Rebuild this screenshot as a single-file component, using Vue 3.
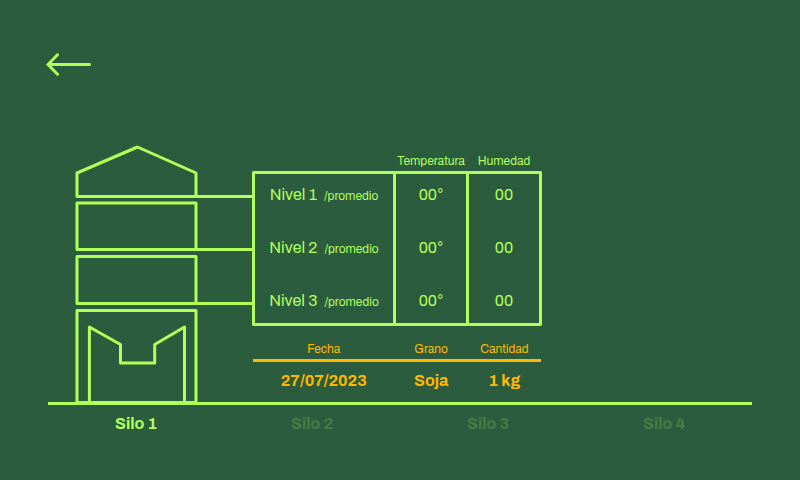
<script setup>
import { ref } from 'vue'

const levels = [
  { name: 'Nivel 1', temperature: '00°', humidity: '00' },
  { name: 'Nivel 2', temperature: '00°', humidity: '00' },
  { name: 'Nivel 3', temperature: '00°', humidity: '00' },
]

const silos = ['Silo 1', 'Silo 2', 'Silo 3', 'Silo 4']
const active = ref(0)
</script>

<template>
  <main class="page">
    <header class="top">
      <button class="back" type="button" aria-label="Volver">
        <svg width="46" height="24" viewBox="0 0 46 24" aria-hidden="true">
          <path d="M43.5 12.5H2M11.5 2.8L2 12.5l9.5 9.7" />
        </svg>
      </button>
    </header>

    <section class="scene">
      <svg class="silo" width="204" height="258" viewBox="0 0 204 258" aria-hidden="true">
        <path d="M148 52.5H29V29L89.5 3L148 29V52.5" />
        <rect x="29" y="59" width="119" height="46.5" />
        <rect x="29" y="112.5" width="119" height="47" />
        <rect x="29" y="166.5" width="119" height="92" />
        <path d="M41.4 258V183L72.5 200.5V219H106.7V200.5L136.5 183V258" />
        <path d="M148 52.5H205M148 105.5H205M148 159.5H205" />
      </svg>

      <div class="data">
        <table class="levels">
          <colgroup>
            <col class="wide" />
            <col />
            <col />
          </colgroup>
          <thead>
            <tr>
              <td></td>
              <th scope="col">Temperatura</th>
              <th scope="col">Humedad</th>
            </tr>
          </thead>
          <tbody>
            <tr v-for="level in levels" :key="level.name">
              <th scope="row">{{ level.name }}<span class="note">/promedio</span></th>
              <td>{{ level.temperature }}</td>
              <td>{{ level.humidity }}</td>
            </tr>
          </tbody>
        </table>

        <table class="batch">
          <colgroup>
            <col class="wide" />
            <col />
            <col />
          </colgroup>
          <thead>
            <tr>
              <th scope="col">Fecha</th>
              <th scope="col">Grano</th>
              <th scope="col">Cantidad</th>
            </tr>
          </thead>
          <tbody>
            <tr>
              <td>27/07/2023</td>
              <td>Soja</td>
              <td>1 kg</td>
            </tr>
          </tbody>
        </table>
      </div>
    </section>

    <nav class="silos" aria-label="Silos">
      <a
        v-for="(silo, i) in silos"
        :key="silo"
        :href="'#silo-' + (i + 1)"
        :class="{ active: i === active }"
        @click.prevent="active = i"
      >{{ silo }}</a>
    </nav>
  </main>
</template>

<style>
body {
  background: #2b5c3e;
}
</style>

<style scoped>
.page {
  --lime: #b2ff59;
  --amber: #ffb800;
  box-sizing: border-box;
  min-height: 100vh;
  padding: 52px 48px 24px;
  background: #2b5c3e;
  color: var(--lime);
  font: 16px/20px Archivo, "Liberation Sans", Arial, sans-serif;
}

.top {
  display: flex;
  margin-bottom: 68px;
}

.back {
  display: flex;
  margin: 0 0 0 -2px;
  padding: 0;
  border: 0;
  background: none;
  color: inherit;
  cursor: pointer;
}

svg {
  display: block;
  flex: none;
  fill: none;
  stroke: currentColor;
  stroke-width: 3;
  stroke-linejoin: round;
}

.back svg {
  stroke-linecap: round;
  stroke-linejoin: miter;
}

.scene {
  display: flex;
  align-items: flex-end;
  border-bottom: 3px solid var(--lime);
}

.data {
  width: 290px;
  padding-bottom: 11px;
}

table {
  width: 100%;
  table-layout: fixed;
  border-collapse: separate;
  border-spacing: 0;
  text-align: center;
}

th,
td {
  padding: 0;
  font-weight: 400;
  white-space: nowrap;
}

col {
  width: 73px;
}

.levels .wide {
  width: 144px;
}

thead th {
  padding-bottom: 2px;
  font-size: 12px;
  line-height: 16px;
}

.levels thead th {
  border-right: 3px solid transparent;
}

.levels tbody th,
.levels tbody td {
  padding: 11px 0 22px;
  border-right: 3px solid var(--lime);
}

.levels tbody th {
  border-left: 3px solid var(--lime);
}

.levels tbody tr:first-child > * {
  border-top: 3px solid var(--lime);
}

.levels tbody tr:last-child > * {
  padding-bottom: 12px;
  border-bottom: 3px solid var(--lime);
}

.levels tbody tr:first-child > :first-child {
  border-top-left-radius: 2px;
}

.levels tbody tr:first-child > :last-child {
  border-top-right-radius: 2px;
}

.levels tbody tr:last-child > :first-child {
  border-bottom-left-radius: 2px;
}

.levels tbody tr:last-child > :last-child {
  border-bottom-right-radius: 2px;
}

.note {
  margin-left: 7px;
  font-size: 12px;
  line-height: 12px;
}

.batch {
  width: 288px;
  margin: 15px auto 0;
  color: var(--amber);
}

.batch .wide {
  width: 141px;
}

.batch th {
  border-bottom: 3px solid var(--amber);
}

.batch td {
  padding-top: 9px;
  font-weight: 700;
}

.silos {
  display: grid;
  grid-template-columns: repeat(4, 1fr);
  padding-top: 9px;
  text-align: center;
}

.silos a {
  color: var(--lime);
  font-weight: 700;
  text-decoration: none;
  opacity: 0.2;
}

.silos a.active {
  opacity: 1;
}
</style>
